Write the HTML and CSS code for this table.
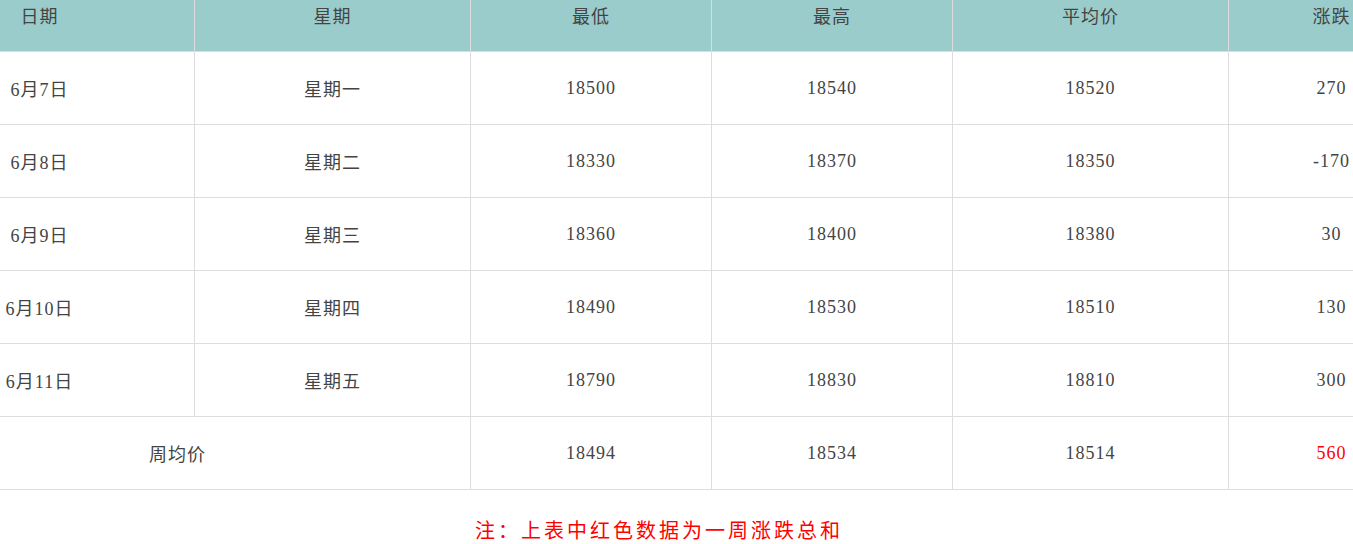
FILE: index.html
```html
<!DOCTYPE html>
<html lang="zh-CN">
<head>
<meta charset="utf-8">
<title>价格周表</title>
<link rel="stylesheet" href="styles.css">
</head>
<body>
<div class="page">
  <table class="price-table">
    <colgroup>
      <col class="c-date">
      <col class="c-week">
      <col class="c-num">
      <col class="c-num">
      <col class="c-avg">
      <col class="c-chg">
    </colgroup>
    <thead>
      <tr>
        <th>日期</th>
        <th>星期</th>
        <th>最低</th>
        <th>最高</th>
        <th>平均价</th>
        <th>涨跌</th>
      </tr>
    </thead>
    <tbody>
      <tr><td>6月7日</td><td>星期一</td><td>18500</td><td>18540</td><td>18520</td><td>270</td></tr>
      <tr><td>6月8日</td><td>星期二</td><td>18330</td><td>18370</td><td>18350</td><td>-170</td></tr>
      <tr><td>6月9日</td><td>星期三</td><td>18360</td><td>18400</td><td>18380</td><td>30</td></tr>
      <tr><td>6月10日</td><td>星期四</td><td>18490</td><td>18530</td><td>18510</td><td>130</td></tr>
      <tr><td>6月11日</td><td>星期五</td><td>18790</td><td>18830</td><td>18810</td><td>300</td></tr>
      <tr><td colspan="2">周均价</td><td>18494</td><td>18534</td><td>18514</td><td class="red">560</td></tr>
    </tbody>
  </table>
  <p class="note">注：上表中红色数据为一周涨跌总和</p>
</div>
</body>
</html>
```
FILE: styles.css
```css
html, body {
  margin: 0;
  padding: 0;
  background: #fff;
  overflow: hidden;
}
body {
  font-family: "Liberation Serif", "Noto Sans CJK SC", serif;
  color: #444;
}
.page {
  width: 1550px;
  margin: -22px 0 0 -116px;
}
.price-table {
  width: 1550px;
  table-layout: fixed;
  border-collapse: collapse;
  font-size: 18px;
  letter-spacing: 1px;
}
.c-date { width: 310px; }
.c-week { width: 276px; }
.c-num { width: 241px; }
.c-avg { width: 276px; }
.c-chg { width: 206px; }
.price-table th,
.price-table td {
  height: 72px;
  padding: 0;
  border: 1px solid #ddd;
  text-align: center;
  vertical-align: middle;
  font-weight: normal;
}
.price-table th {
  background: #9bcccc;
  color: #444;
}
.price-table .red {
  color: #ff0000;
}
.note {
  margin: 26px 0 0;
  text-align: center;
  color: #ff0000;
  font-size: 20px;
  line-height: 30px;
  letter-spacing: 3px;
}
```
